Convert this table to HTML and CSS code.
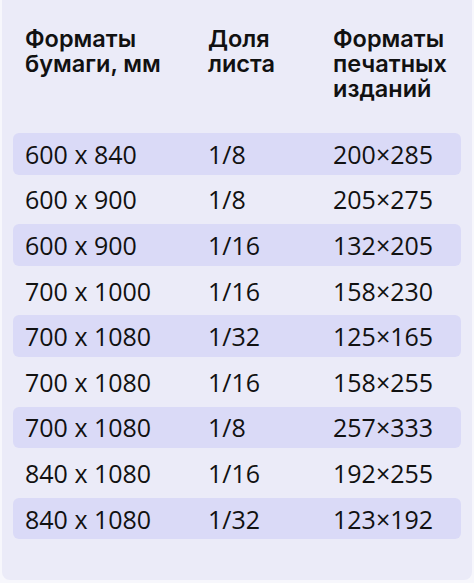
FILE: index.html
```html
<!DOCTYPE html>
<html lang="ru">
<head>
<meta charset="utf-8">
<link rel="stylesheet" href="styles.css">
</head>
<body>
<div class="card">
  <div class="head">
    <div class="c1">Форматы<br>бумаги, мм</div>
    <div class="c2">Доля<br>листа</div>
    <div class="c3">Форматы<br>печатных<br>изданий</div>
  </div>
  <div class="rows">
    <div class="row hl"><span class="c1">600 x 840</span><span class="c2">1/8</span><span class="c3">200×285</span></div>
    <div class="row"><span class="c1">600 x 900</span><span class="c2">1/8</span><span class="c3">205×275</span></div>
    <div class="row hl"><span class="c1">600 x 900</span><span class="c2">1/16</span><span class="c3">132×205</span></div>
    <div class="row"><span class="c1">700 x 1000</span><span class="c2">1/16</span><span class="c3">158×230</span></div>
    <div class="row hl"><span class="c1">700 x 1080</span><span class="c2">1/32</span><span class="c3">125×165</span></div>
    <div class="row"><span class="c1">700 x 1080</span><span class="c2">1/16</span><span class="c3">158×255</span></div>
    <div class="row hl"><span class="c1">700 x 1080</span><span class="c2">1/8</span><span class="c3">257×333</span></div>
    <div class="row"><span class="c1">840 x 1080</span><span class="c2">1/16</span><span class="c3">192×255</span></div>
    <div class="row hl"><span class="c1">840 x 1080</span><span class="c2">1/32</span><span class="c3">123×192</span></div>
  </div>
</div>
</body>
</html>
```

FILE: styles.css
```css
html, body {
  margin: 0;
  padding: 0;
  background: #f7f7fc;
}
body {
  width: 474px;
  height: 583px;
  overflow: hidden;
  padding: 0 2px 3px 2px;
  box-sizing: border-box;
}
.card {
  height: 580px;
  background: #ebebf8;
  border-radius: 0 0 8px 8px;
  box-sizing: border-box;
  padding: 26px 11px 0 11px;
  color: #111;
}
.head {
  display: grid;
  grid-template-columns: 183px 125px 1fr;
  font-family: "Inter", sans-serif;
  font-weight: 600;
  font-size: 23.5px;
  line-height: 25px;
  padding-left: 12px;
  height: 107px;
}
.rows {
  display: flex;
  flex-direction: column;
  gap: 4px;
}
.row {
  display: grid;
  grid-template-columns: 183px 125px 1fr;
  height: 41.6px;
  align-items: center;
  padding-left: 12px;
  border-radius: 6px;
  font-family: "Open Sans", sans-serif;
  font-size: 25px;
}
.row.hl {
  background: #dadaf7;
}
```
